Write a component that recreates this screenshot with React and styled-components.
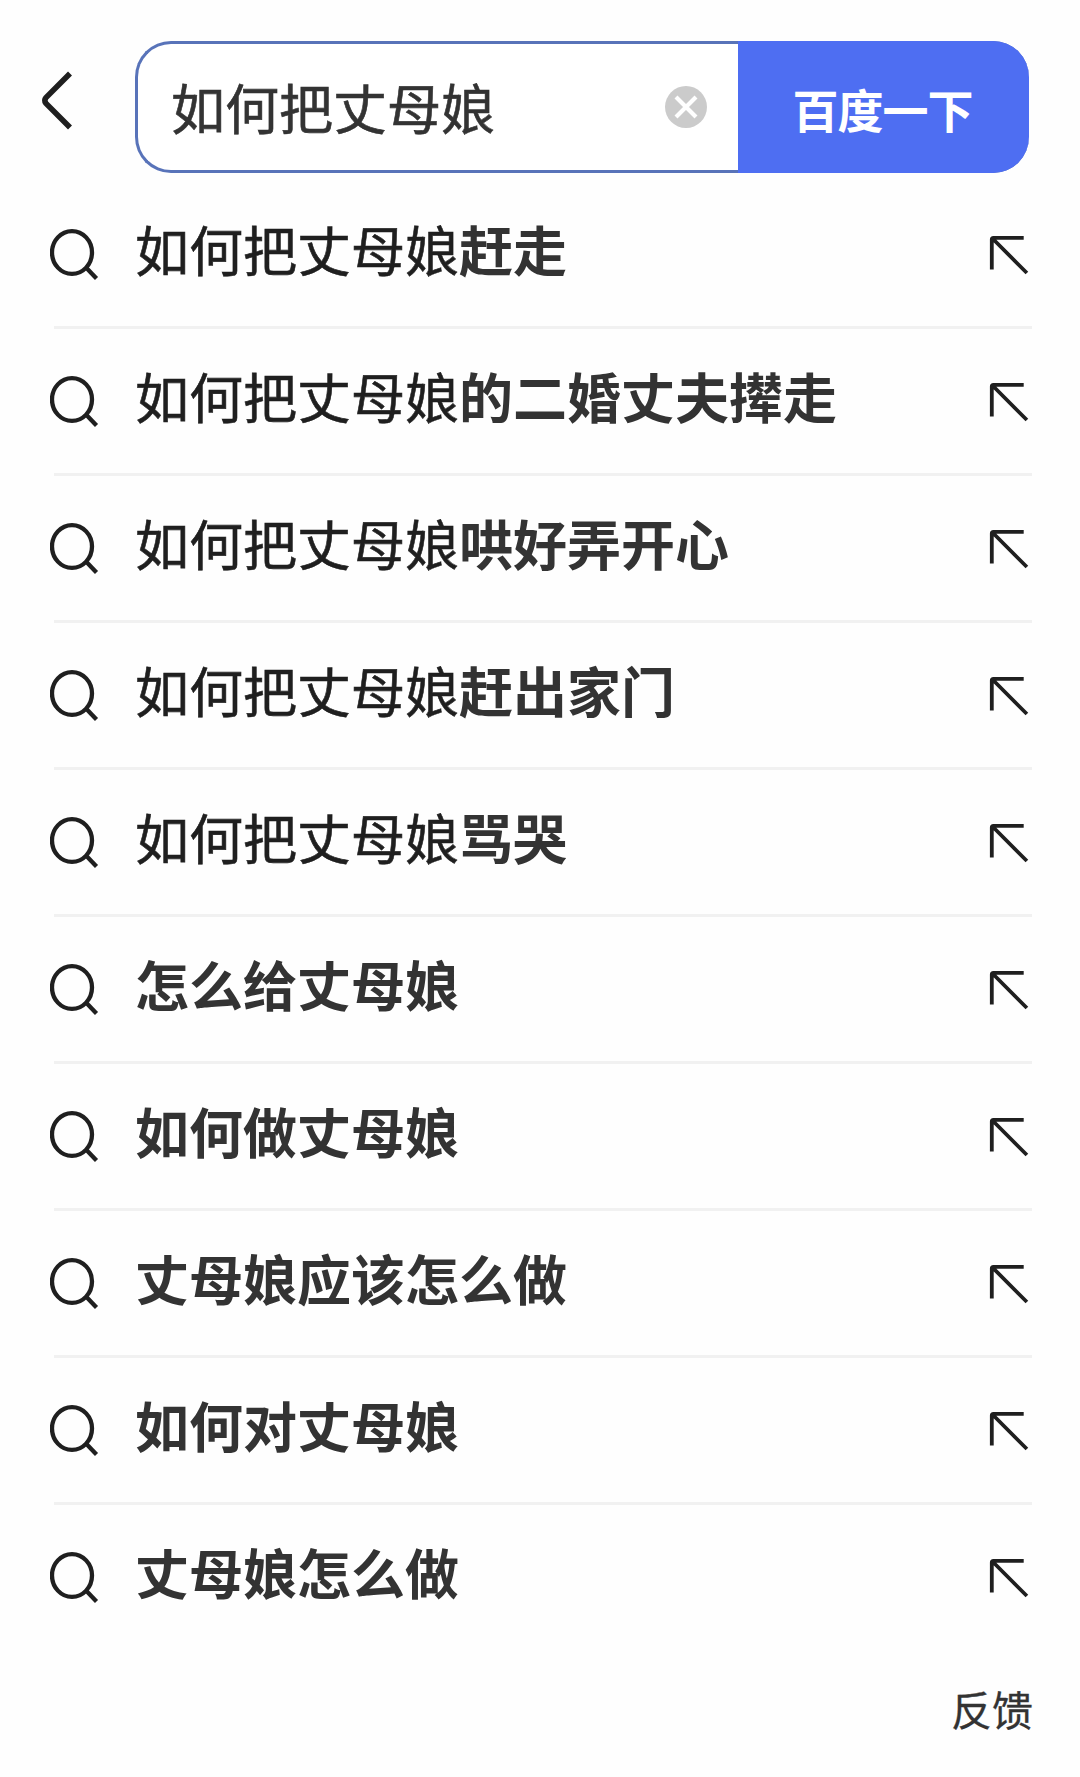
import React from "react";
import styled, { createGlobalStyle } from "styled-components";

const GlobalStyle = createGlobalStyle`
  body {
    margin: 0;
    background: #fefefe;
    font-family: "Noto Sans CJK SC", "Liberation Sans", sans-serif;
  }
`;

const Page = styled.main`
  box-sizing: border-box;
  width: 1080px;
  height: 1777px;
  padding-top: 41px;
  overflow: hidden;
  background: #fefefe;
`;

const Header = styled.header`
  display: flex;
  height: 132px;
  padding: 0 51px 0 40px;
`;

const BackButton = styled.button`
  flex: none;
  display: flex;
  align-items: flex-start;
  width: 95px;
  padding: 30px 0 0;
  border: 0;
  background: none;
`;

const SearchBox = styled.form`
  flex: 1;
  display: flex;
  box-sizing: border-box;
  border: 3px solid #5873b9;
  border-right: 0;
  border-radius: 36px;
  background: #fff;
`;

const Query = styled.div`
  flex: 1;
  padding-left: 33px;
  color: #333;
  font-size: 54px;
  line-height: 126px;
  white-space: nowrap;
  -webkit-text-stroke: 0.6px currentColor;
`;

const ClearButton = styled.button`
  align-self: center;
  width: 42px;
  height: 42px;
  margin-right: 31px;
  padding: 0;
  border: 0;
  background: none;
  svg { display: block; }
`;

const SubmitButton = styled.button`
  width: 291px;
  height: 132px;
  margin: -3px 0;
  padding: 2px 2px 0 0;
  border: 0;
  border-radius: 0 36px 36px 0;
  background: #4e6ef2;
  color: #fff;
  font: bold 46px/128px "Noto Sans CJK SC", sans-serif;
  letter-spacing: -1px;
`;

const List = styled.ul`
  margin: 9px 48px 0 54px;
  padding: 0;
  list-style: none;
`;

const Row = styled.li`
  display: flex;
  box-sizing: border-box;
  height: 147px;
  border-bottom: 3px solid ${(p) => (p.$last ? "transparent" : "#f1f1f1")};
`;

const SearchMark = styled.svg`
  flex: none;
  width: 52px;
  height: 54px;
  margin: 45px 33px 0 -4px;
`;

const Suggestion = styled.span`
  flex: 1;
  color: #1f1f1f;
  font-size: 54px;
  line-height: 133px;
  white-space: nowrap;
  -webkit-text-stroke: 0.6px currentColor;
  b {
    color: #333;
    font-weight: 700;
    -webkit-text-stroke: 0;
  }
`;

const FillMark = styled.svg`
  flex: none;
  width: 42px;
  height: 42px;
  margin: 52px 2px 0 0;
`;

const Feedback = styled.footer`
  padding: 26px 47px 0 0;
  color: #333;
  font-size: 41px;
  line-height: 60px;
  text-align: right;
  -webkit-text-stroke: 0.3px currentColor;
`;

const SUGGESTIONS = [
  ["如何把丈母娘", "赶走"],
  ["如何把丈母娘", "的二婚丈夫撵走"],
  ["如何把丈母娘", "哄好弄开心"],
  ["如何把丈母娘", "赶出家门"],
  ["如何把丈母娘", "骂哭"],
  ["", "怎么给丈母娘"],
  ["", "如何做丈母娘"],
  ["", "丈母娘应该怎么做"],
  ["", "如何对丈母娘"],
  ["", "丈母娘怎么做"],
];

export default function App() {
  return (
    <Page>
      <GlobalStyle />
      <Header>
        <BackButton type="button" aria-label="返回">
          <svg width="34" height="60" viewBox="0 0 34 60" fill="none" stroke="#1f1f1f" strokeWidth="5.6">
            <path d="M30 2.5 6 26.5Q3.6 29.5 6 32.5L30 56.5" />
          </svg>
        </BackButton>
        <SearchBox>
          <Query>如何把丈母娘</Query>
          <ClearButton type="button" aria-label="清除">
            <svg width="42" height="42" viewBox="0 0 42 42">
              <circle cx="21" cy="21" r="21" fill="#cbcbcb" />
              <path d="M11 11 31 31M31 11 11 31" stroke="#fff" strokeWidth="4.2" />
            </svg>
          </ClearButton>
          <SubmitButton type="button">百度一下</SubmitButton>
        </SearchBox>
      </Header>
      <List>
        {SUGGESTIONS.map(([typed, rest], i) => (
          <Row key={typed + rest} $last={i === SUGGESTIONS.length - 1}>
            <SearchMark viewBox="0 0 52 54" fill="none" stroke="#1f1f1f" strokeWidth="4.3">
              <ellipse cx="22" cy="25.5" rx="20" ry="21.4" />
              <path d="M36 40.5 46.5 51.5" />
            </SearchMark>
            <Suggestion>
              {typed}
              <b>{rest}</b>
            </Suggestion>
            <FillMark viewBox="0 0 42 42" fill="none" stroke="#1f1f1f" strokeWidth="3.8">
              <path d="M35.7 3.8H5.5Q3.8 3.8 3.8 5.5V35.5M4.5 4.5 38.9 39" />
            </FillMark>
          </Row>
        ))}
      </List>
      <Feedback>反馈</Feedback>
    </Page>
  );
}
